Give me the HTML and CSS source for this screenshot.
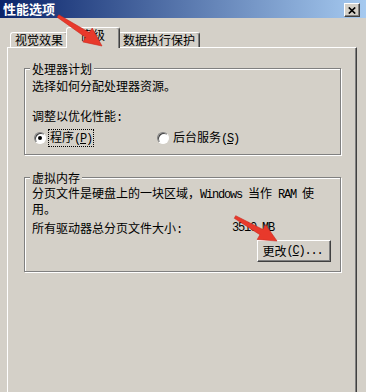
FILE: index.html
```html
<!DOCTYPE html>
<html lang="zh-CN">
<head>
<meta charset="utf-8">
<title>性能选项</title>
<link rel="stylesheet" href="styles.css">
</head>
<body>
<div class="window">
  <div class="titlebar">
    <span class="title">性能选项</span>
    <span class="close"><svg width="8" height="7" viewBox="0 0 8 7"><path d="M0.8 0.5 L7.2 6.5 M7.2 0.5 L0.8 6.5" stroke="#000" stroke-width="1.7"/></svg></span>
  </div>
  <div class="tabs">
    <div class="tab t1">视觉效果</div>
    <div class="tab active">高级</div>
    <div class="tab t3">数据执行保护</div>
  </div>
  <div class="panel">
    <fieldset class="group g1">
      <legend>处理器计划</legend>
      <p class="line">选择如何分配处理器资源。</p>
      <p class="line adjust">调整以优化性能<span class="m">:</span></p>
      <div class="radios">
        <div class="radio"><span class="dot checked"></span><span class="rlabel focus">程序<span class="m">(<u>P</u>)</span></span></div>
        <div class="radio"><span class="dot"></span><span class="rlabel">后台服务<span class="m">(<u>S</u>)</span></span></div>
      </div>
    </fieldset>
    <fieldset class="group g2">
      <legend>虚拟内存</legend>
      <p class="desc">分页文件是硬盘上的一块区域，<span class="m">Windows </span>当作<span class="m"> RAM </span>使<br>用。</p>
      <div class="size"><span>所有驱动器总分页文件大小<span class="m">:</span></span><span class="m">3510 MB</span></div>
      <div class="btnrow"><span class="button">更改<span class="m">(<u>C</u>)...</span></span></div>
    </fieldset>
  </div>
  <svg class="arrows" width="366" height="392" viewBox="0 0 366 392">
    <polygon points="58.8,14.8 89.2,32.5 92.2,28.1 102,46 82.8,41.9 85.8,37.5 57.2,17.2" fill="#e8392b" stroke="#c9261d" stroke-width="0.6" stroke-linejoin="round"/>
    <polygon points="235.7,215.7 262.9,229.5 265.6,224.7 277,241 257.2,239.5 259.9,234.7 234.3,218.3" fill="#e8392b" stroke="#c9261d" stroke-width="0.6" stroke-linejoin="round"/>
  </svg>
</div>
</body>
</html>
```
FILE: styles.css
```css
* { box-sizing: border-box; margin: 0; padding: 0; }
html, body { width: 366px; height: 392px; overflow: hidden; }
body {
  background: #d4d0c8;
  color: #000;
  font: 12px/14px "Noto Sans CJK SC", "Noto Sans", sans-serif;
}
.window { position: relative; height: 392px; }
.m {
  font-family: "Liberation Mono", "DejaVu Sans Mono", monospace;
  font-size: 12px;
  letter-spacing: -1.2px;
}
u { text-decoration: underline; text-underline-offset: 1px; }

.titlebar {
  height: 18px;
  display: flex;
  justify-content: space-between;
  align-items: flex-start;
  padding: 0 6px 0 3px;
  background: linear-gradient(to right, #0a246a, #a6caf0);
}
.title {
  color: #fff;
  font-weight: bold;
  font-size: 13px;
  line-height: 18px;
}
.close {
  width: 16px;
  height: 14px;
  margin-top: 3px;
  background: #d4d0c8;
  border: 1px solid;
  border-color: #fff #404040 #404040 #fff;
  box-shadow: inset -1px -1px #808080;
  display: flex;
  align-items: center;
  justify-content: center;
}

.tabs {
  height: 29px;
  display: flex;
  align-items: flex-end;
  padding-left: 10px;
}
.tab {
  height: 15px;
  border: 1px solid;
  border-bottom: 0;
  border-color: #fff #404040 transparent #fff;
  box-shadow: inset -1px 0 #808080;
  border-radius: 3px 3px 0 0;
  text-align: center;
  line-height: 13px;
  background: #d4d0c8;
}
.t1 { width: 58px; }
.t3 { width: 82px; }
.active {
  width: 54px;
  height: 21px;
  margin: 0 -2px -1px;
  position: relative;
  z-index: 1;
  line-height: 14px;
}

.panel {
  margin-left: 7px;
  width: 350px;
  height: 360px;
  border: 1px solid;
  border-color: #fff #404040 #404040 #fff;
  box-shadow: inset -1px -1px #808080;
  padding: 13px 0 0 16px;
}

.group {
  width: 317px;
  min-width: 0;
  border: 1px solid #808080;
  box-shadow: inset 1px 1px #fff, 1px 1px #fff;
  padding: 3px 9px 10px 7px;
}
.group legend {
  padding: 0 2px;
  margin-left: -2px;
  line-height: 15px;
  background: #d4d0c8;
}
.line { line-height: 14px; }
.adjust { margin-top: 16px; }

.radios {
  margin-top: 5px;
  height: 14px;
  padding-left: 2px;
  display: grid;
  grid-template-columns: 123px auto;
}
.radio { display: flex; align-items: center; gap: 3px; }
.dot {
  position: relative;
  width: 12px;
  height: 12px;
  border-radius: 50%;
  background: #fff;
  border: 1px solid;
  border-color: #808080 #fff #fff #808080;
  box-shadow: inset 1px 1px #404040;
}
.dot.checked::after {
  content: "";
  position: absolute;
  left: 3px;
  top: 3px;
  width: 4px;
  height: 4px;
  border-radius: 50%;
  background: #000;
}
.rlabel { padding: 0 1px; line-height: 14px; }
.focus { outline: 1px dotted #000; outline-offset: 0; }

.g2 { margin-top: 15px; padding: 1px 9px 9px 7px; }
.desc { line-height: 13px; }
.size {
  margin-top: 6px;
  display: grid;
  grid-template-columns: 200px auto;
  line-height: 14px;
}
.btnrow { margin-top: 3px; display: flex; justify-content: flex-end; }
.button {
  width: 74px;
  height: 22px;
  border: 1px solid;
  border-color: #fff #404040 #404040 #fff;
  box-shadow: inset -1px -1px #808080;
  display: flex;
  align-items: center;
  justify-content: center;
  line-height: 14px;
  padding-right: 3px;
}

.arrows {
  position: absolute;
  left: 0;
  top: 0;
  z-index: 5;
  pointer-events: none;
}
```
